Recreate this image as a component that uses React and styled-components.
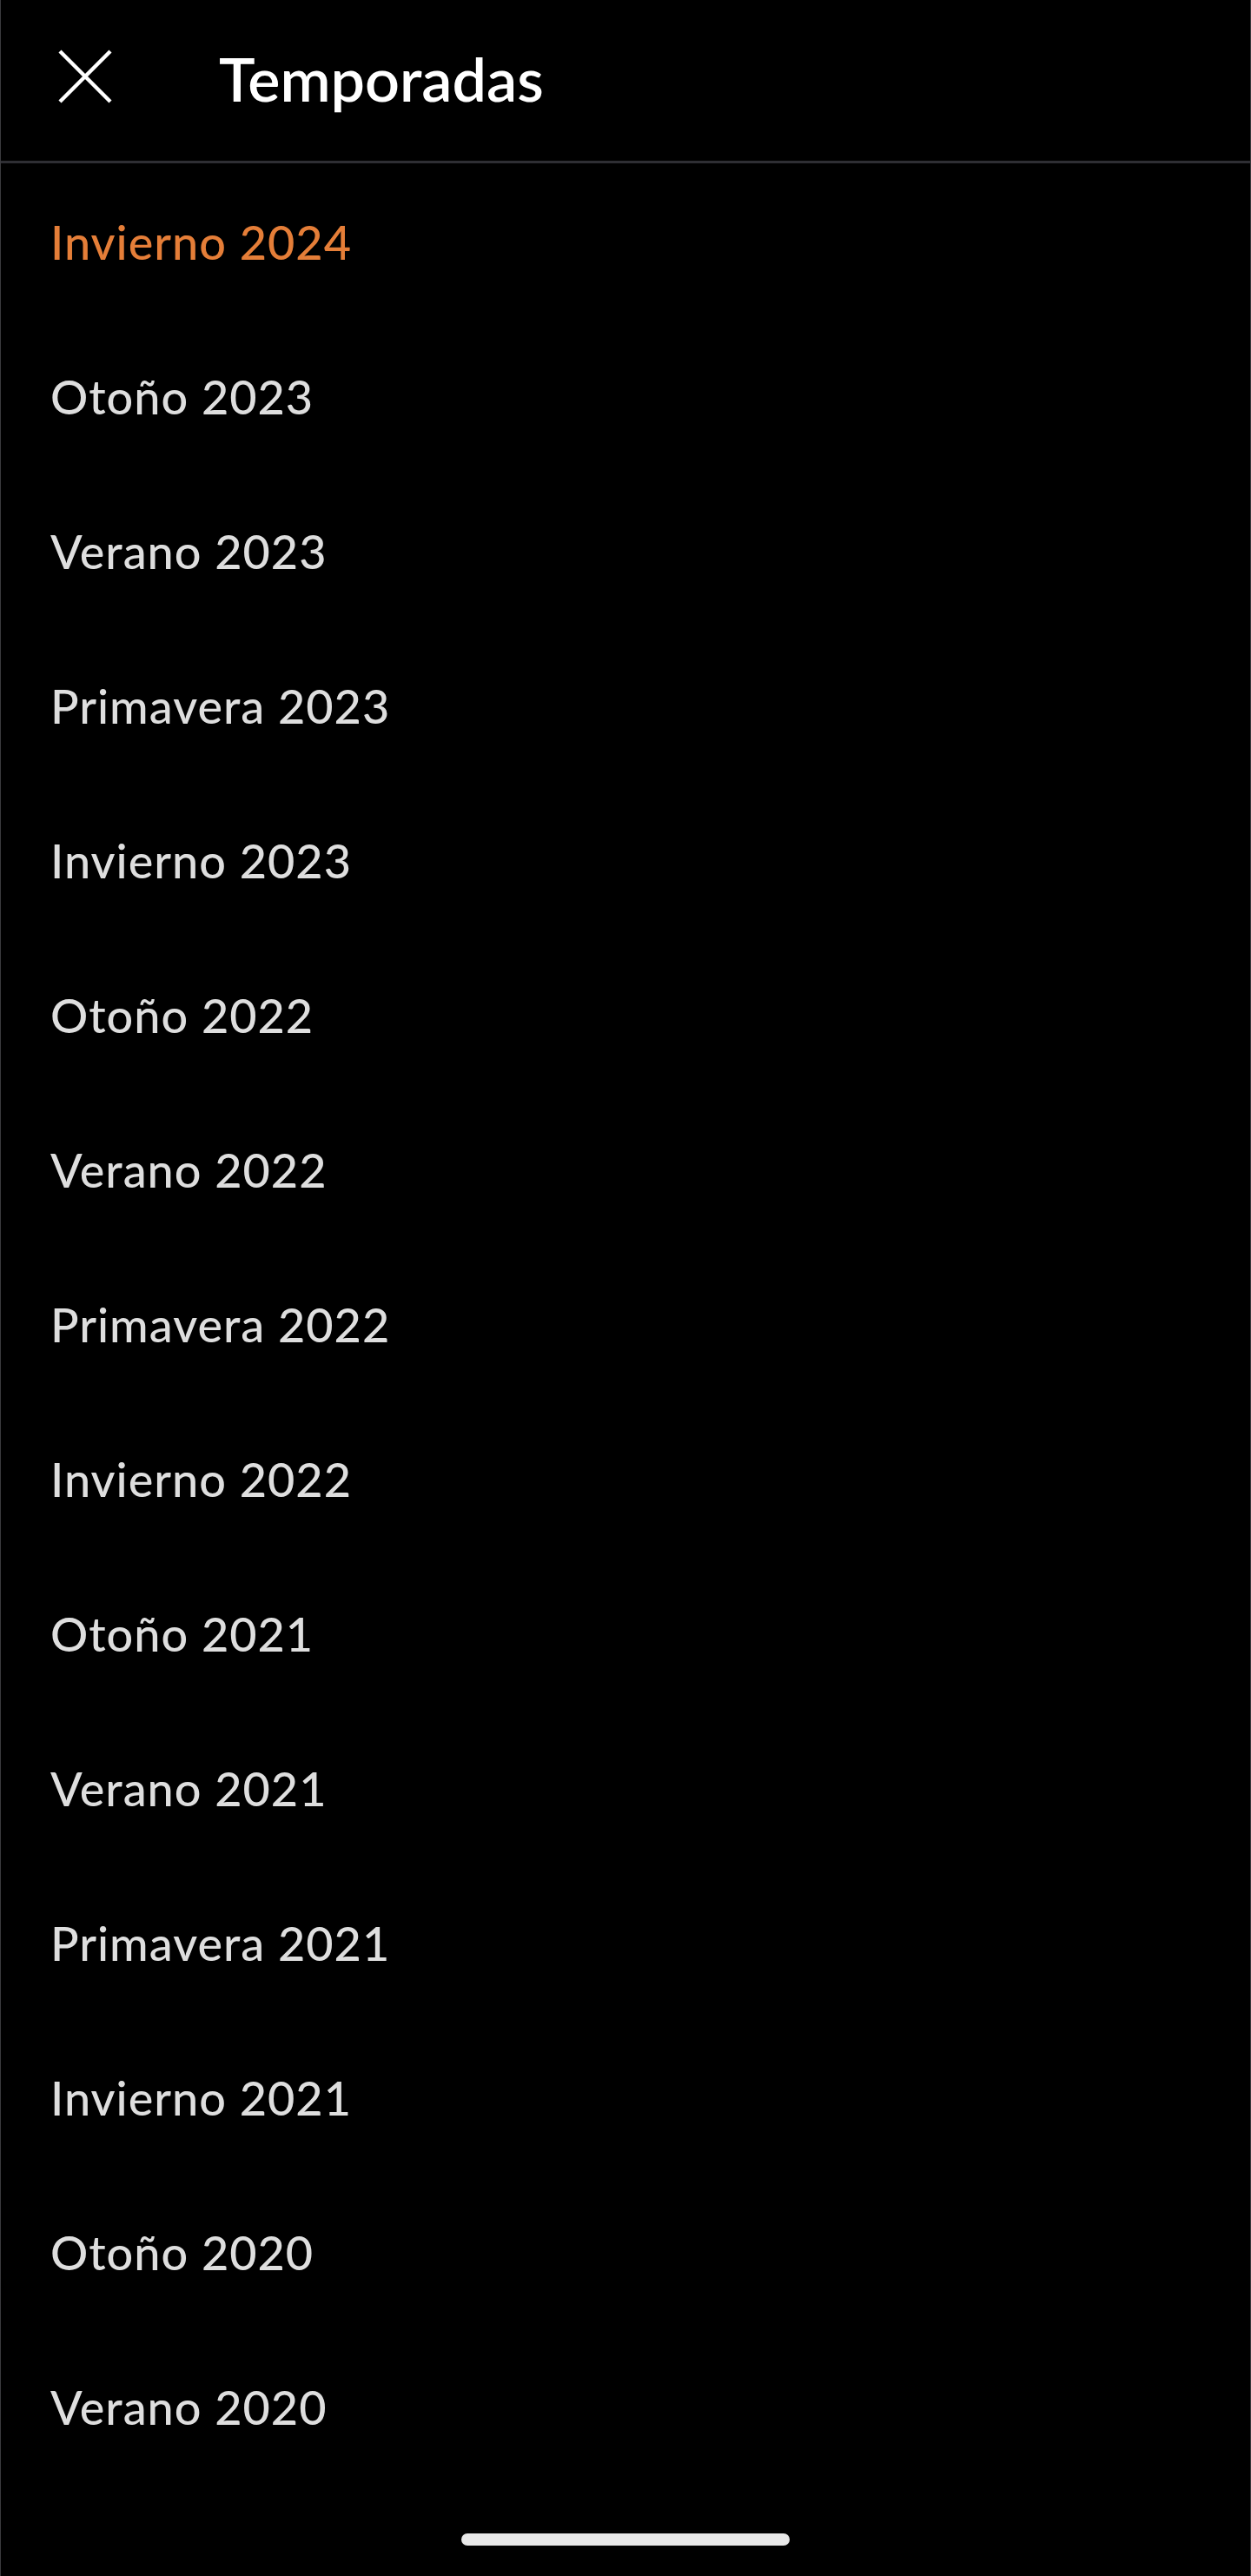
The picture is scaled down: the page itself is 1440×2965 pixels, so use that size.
import React from 'react'
import styled, { createGlobalStyle } from 'styled-components'

const GlobalStyle = createGlobalStyle`
	html, body {
		margin: 0;
		padding: 0;
		background: #000;
	}
	body {
		font-family: Lato, "Noto Sans", sans-serif;
		-webkit-font-smoothing: antialiased;
	}
`

const Screen = styled.div`
	box-sizing: border-box;
	width: 1440px;
	height: 2965px;
	background: #000;
	border-left: 1px solid #3a3a3e;
	border-right: 1px solid #3a3a3e;
	display: flex;
	flex-direction: column;
`

const Header = styled.header`
	height: 185px;
	flex-shrink: 0;
	display: flex;
	align-items: center;
	padding: 0 0 0 66px;
	border-bottom: 3px solid #2e2e33;
	box-sizing: content-box;
`

const CloseButton = styled.button`
	width: 62px;
	height: 62px;
	padding: 0;
	border: 0;
	background: none;
	display: flex;
	align-items: center;
	justify-content: center;
	cursor: pointer;
	margin-top: -10px;
`

const Title = styled.h1`
	margin: -6px 0 0 123px;
	font-size: 70px;
	font-weight: 600;
	color: #fff;
	line-height: 1.2;
`

const List = styled.ul`
	list-style: none;
	margin: 0;
	padding: 2px 0 0;
	flex: 1;
`

const Item = styled.li`
	height: 178px;
	line-height: 178px;
	padding-left: 57px;
	font-size: 54px;
	font-weight: 500;
	letter-spacing: 1px;
	color: ${ p => p.$active ? '#e57e38' : '#dedede' };
	white-space: nowrap;
`

const HomeBar = styled.div`
	align-self: center;
	width: 378px;
	height: 14px;
	border-radius: 7px;
	background: #e8e8e8;
	margin-bottom: 35px;
`

const seasons = [
	'Invierno 2024',
	'Otoño 2023',
	'Verano 2023',
	'Primavera 2023',
	'Invierno 2023',
	'Otoño 2022',
	'Verano 2022',
	'Primavera 2022',
	'Invierno 2022',
	'Otoño 2021',
	'Verano 2021',
	'Primavera 2021',
	'Invierno 2021',
	'Otoño 2020',
	'Verano 2020',
]

const CloseIcon = () =>
	<svg width="62" height="62" viewBox="0 0 62 62" fill="none">
		<path d="M2 2 L60 60 M60 2 L2 60" stroke="#fff" strokeWidth="4.4" strokeLinecap="butt" />
	</svg>

const App = () =>
{
	return (
		<Screen>
			<GlobalStyle />
			<Header>
				<CloseButton aria-label="Cerrar"><CloseIcon /></CloseButton>
				<Title>Temporadas</Title>
			</Header>
			<List>
				{ seasons.map((s, i) =>
					<Item key={ s } $active={ i === 0 }>{ s }</Item>
				) }
			</List>
			<HomeBar />
		</Screen>
	)
}

export default App
